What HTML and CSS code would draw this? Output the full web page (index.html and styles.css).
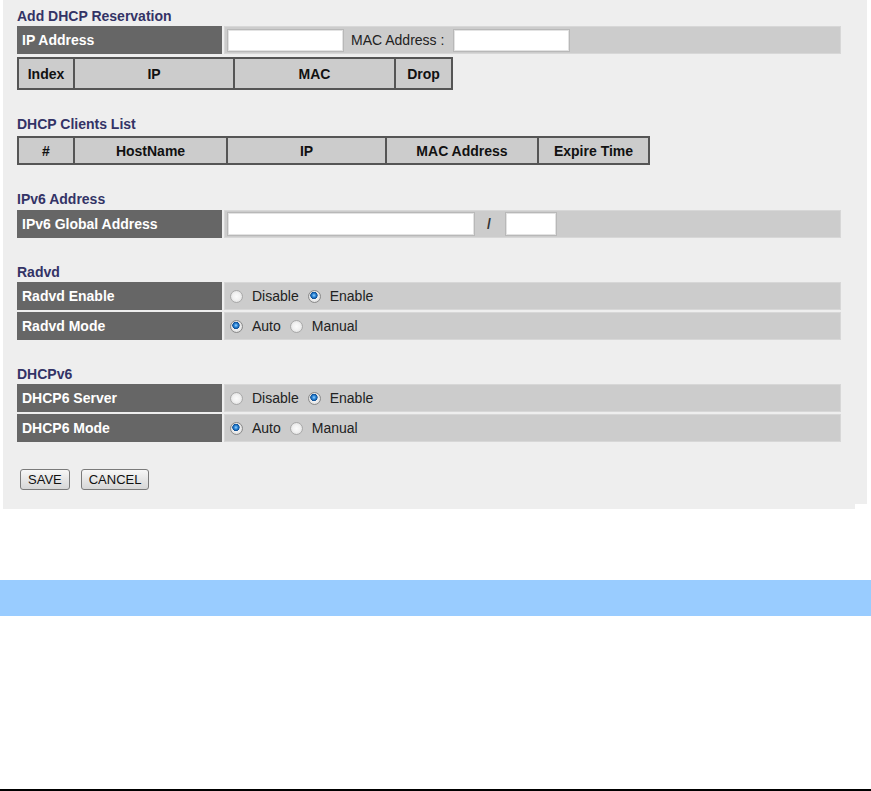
FILE: index.html
```html
<!DOCTYPE html>
<html>
<head>
<meta charset="utf-8">
<title>LAN IPv6 Settings</title>
<link rel="stylesheet" href="styles.css">
</head>
<body>
<div class="top">
  <div class="panel">
    <section class="sec">
      <h3 class="title">Add DHCP Reservation</h3>
      <div class="frow">
        <div class="flabel">IP Address</div>
        <div class="fval">
          <input class="txt w-ip" type="text">
          <span class="inline-label">MAC Address :</span>
          <input class="txt w-ip" type="text">
        </div>
      </div>
      <div class="grid g-res">
        <div class="gc r1">Index</div>
        <div class="gc r2">IP</div>
        <div class="gc r3">MAC</div>
        <div class="gc r4">Drop</div>
      </div>
    </section>

    <section class="sec">
      <h3 class="title mb4">DHCP Clients List</h3>
      <div class="grid g-cli">
        <div class="gc k1">#</div>
        <div class="gc k2">HostName</div>
        <div class="gc k3">IP</div>
        <div class="gc k4">MAC Address</div>
        <div class="gc k5">Expire Time</div>
      </div>
    </section>

    <section class="sec">
      <h3 class="title mb3">IPv6 Address</h3>
      <div class="frow">
        <div class="flabel">IPv6 Global Address</div>
        <div class="fval">
          <input class="txt w-v6" type="text">
          <span class="slash">/</span>
          <input class="txt w-pre" type="text">
        </div>
      </div>
    </section>

    <section class="sec">
      <h3 class="title">Radvd</h3>
      <div class="frow">
        <div class="flabel">Radvd Enable</div>
        <div class="fval radios">
          <label class="opt"><input class="rad" type="radio" name="radvd">Disable</label>
          <label class="opt"><input class="rad" type="radio" name="radvd" checked>Enable</label>
        </div>
      </div>
      <div class="frow">
        <div class="flabel">Radvd Mode</div>
        <div class="fval radios">
          <label class="opt"><input class="rad" type="radio" name="radvdmode" checked>Auto</label>
          <label class="opt"><input class="rad" type="radio" name="radvdmode">Manual</label>
        </div>
      </div>
    </section>

    <section class="sec">
      <h3 class="title">DHCPv6</h3>
      <div class="frow">
        <div class="flabel">DHCP6 Server</div>
        <div class="fval radios">
          <label class="opt"><input class="rad" type="radio" name="d6">Disable</label>
          <label class="opt"><input class="rad" type="radio" name="d6" checked>Enable</label>
        </div>
      </div>
      <div class="frow">
        <div class="flabel">DHCP6 Mode</div>
        <div class="fval radios">
          <label class="opt"><input class="rad" type="radio" name="d6mode" checked>Auto</label>
          <label class="opt"><input class="rad" type="radio" name="d6mode">Manual</label>
        </div>
      </div>
    </section>

    <div class="btns">
      <button class="btn" type="button">SAVE</button>
      <button class="btn" type="button">CANCEL</button>
    </div>
  </div>
  <div class="side"></div>
</div>
<div class="bluebar"></div>
<div class="rule"></div>
</body>
</html>
```

FILE: styles.css
```css
* {
  box-sizing: border-box;
}

html, body {
  margin: 0;
  padding: 0;
  background: #ffffff;
}

body {
  width: 871px;
  height: 791px;
  overflow: hidden;
  font-family: "Liberation Sans", Arial, sans-serif;
  font-size: 14px;
  color: #222;
}

.top {
  display: flex;
  align-items: flex-start;
  padding-left: 3px;
}

.panel {
  width: 852px;
  height: 509px;
  background: #eeeeee;
  padding: 8px 0 0 14px;
}

.side {
  width: 12px;
  height: 504px;
  background: #eeeeee;
}

.sec + .sec {
  margin-top: 26px;
}

.title {
  margin: 0 0 2px;
  font-size: 14px;
  line-height: 16px;
  font-weight: bold;
  color: #333366;
}

.title.mb3 {
  margin-bottom: 3px;
}

.title.mb4 {
  margin-bottom: 4px;
}

.frow {
  display: flex;
  height: 28px;
}

.frow + .frow {
  margin-top: 2px;
}

.flabel {
  width: 205px;
  background: #666666;
  color: #ffffff;
  font-weight: bold;
  padding-left: 5px;
  display: flex;
  align-items: center;
}

.fval {
  width: 617px;
  margin-left: 2px;
  background: #cccccc;
  border: 1px solid #d7d7d7;
  display: flex;
  align-items: center;
  padding-left: 2px;
  color: #222;
}

.fval.radios {
  padding-left: 5px;
}

.txt {
  height: 23px;
  margin: 0;
  padding: 0 3px;
  border: 1px solid #b8b8b8;
  box-shadow: inset 0 0 0 1px #e3e3e3;
  background: #ffffff;
  font: inherit;
  outline: none;
}

.w-ip {
  width: 117px;
}

.w-v6 {
  width: 248px;
  height: 24px;
}

.w-pre {
  width: 52px;
  height: 24px;
}

.inline-label {
  margin: 0 9px 0 7px;
}

.slash {
  margin: 0 14px 0 12px;
  font-weight: bold;
  color: #333;
}

.grid {
  display: flex;
  border: 2px solid #555555;
  background: #cccccc;
}

.g-res {
  width: 436px;
  height: 33px;
  margin-top: 3px;
}

.g-cli {
  width: 633px;
  height: 29px;
}

.gc {
  display: flex;
  align-items: center;
  justify-content: center;
  font-weight: bold;
  color: #111;
}

.gc + .gc {
  border-left: 2px solid #555555;
}

.r1 { width: 54px; }
.r2 { width: 160px; }
.r3 { width: 161px; }
.r4 { width: 57px; }

.k1 { width: 54px; }
.k2 { width: 153px; }
.k3 { width: 159px; }
.k4 { width: 152px; }
.k5 { width: 111px; }

.opt {
  display: inline-flex;
  align-items: center;
  margin-right: 9px;
  color: #222;
}

.rad {
  -webkit-appearance: none;
  appearance: none;
  width: 13px;
  height: 13px;
  margin: 0 9px 0 0;
  border-radius: 50%;
  border: 1px solid #a9a9a9;
  background: radial-gradient(circle at 50% 50%, #fbfbfb 0, #f2f2f2 45%, #d6d6d6 100%);
}

.rad:checked {
  border-color: #8a8a8a;
  background:
    radial-gradient(circle at 45% 40%, #9fd4ff 0, #3a93e0 1.5px, #0f5aa8 3px, #0d4c8f 3.4px, rgba(255,255,255,0) 3.9px),
    radial-gradient(circle at 50% 50%, #fbfbfb 0, #eeeeee 45%, #d0d0d0 100%);
}

.btns {
  margin-top: 27px;
  padding-left: 3px;
  display: flex;
  gap: 11px;
}

.btn {
  height: 21px;
  margin: 0;
  padding: 0 7px;
  border: 1px solid #7a7a7a;
  border-radius: 3px;
  background: linear-gradient(#f7f7f7, #e6e6e6 50%, #d7d7d7);
  font-family: "Liberation Sans", Arial, sans-serif;
  font-size: 13px;
  color: #111;
}

.bluebar {
  margin-top: 71px;
  height: 36px;
  background: #99ccff;
}

.rule {
  margin-top: 173px;
  height: 2px;
  background: #000000;
}
```
